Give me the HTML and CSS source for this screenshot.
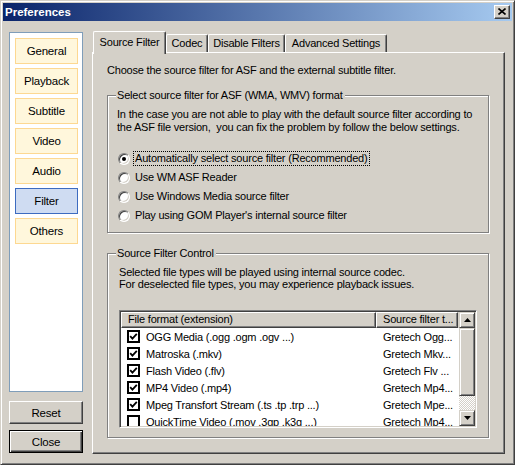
FILE: index.html
```html
<!DOCTYPE html>
<html>
<head>
<meta charset="utf-8">
<link rel="stylesheet" href="styles.css">
</head>
<body>
<div class="window">
  <div class="titlebar">
    <span class="title">Preferences</span>
    <span class="xbtn"><svg width="8" height="7" viewBox="0 0 8 7"><path d="M0.5 0.5 L7.5 6.5 M7.5 0.5 L0.5 6.5" stroke="#000" stroke-width="1.6" fill="none"/></svg></span>
  </div>
  <div class="main">
    <div class="leftcol">
      <div class="sidebar">
        <div class="navbtn">General</div>
        <div class="navbtn">Playback</div>
        <div class="navbtn">Subtitle</div>
        <div class="navbtn">Video</div>
        <div class="navbtn">Audio</div>
        <div class="navbtn active">Filter</div>
        <div class="navbtn">Others</div>
      </div>
      <div class="btn">Reset</div>
      <div class="btn default">Close</div>
    </div>
    <div class="rightcol">
      <div class="tabs">
        <div class="tab active t1">Source Filter</div>
        <div class="tab t2">Codec</div>
        <div class="tab t3">Disable Filters</div>
        <div class="tab t4">Advanced Settings</div>
      </div>
      <div class="panel">
        <p class="intro">Choose the source filter for ASF and the external subtitle filter.</p>
        <fieldset class="group g1">
          <legend>Select source filter for ASF (WMA, WMV) format</legend>
          <p class="desc">In the case you are not able to play with the default source filter according to<br>the ASF file version,&nbsp; you can fix the problem by follow the below settings.</p>
          <div class="radios">
            <div class="radio"><span class="rb checked"></span><span class="rl focus">Automatically select source filter (Recommended)</span></div>
            <div class="radio"><span class="rb"></span><span class="rl">Use WM ASF Reader</span></div>
            <div class="radio"><span class="rb"></span><span class="rl">Use Windows Media source filter</span></div>
            <div class="radio"><span class="rb"></span><span class="rl">Play using GOM Player's internal source filter</span></div>
          </div>
        </fieldset>
        <fieldset class="group g2">
          <legend>Source Filter Control</legend>
          <p class="desc2">Selected file types will be played using internal source codec.<br>For deselected file types, you may experience playback issues.</p>
          <div class="list">
            <div class="listmain">
              <div class="lhead">
                <div class="hc c1">File format (extension)</div>
                <div class="hc c2">Source filter t...</div>
                <div class="hfill"></div>
              </div>
              <div class="rows">
                <div class="row"><div class="c1 cell"><svg class="cb" width="13" height="13" viewBox="0 0 13 13"><rect x="1" y="1" width="11" height="11" fill="#fff" stroke="#000" stroke-width="2"/><path d="M3.2 6.2 L5.4 8.6 L9.8 3.8" stroke="#000" stroke-width="1.8" fill="none"/></svg><span>OGG Media (.ogg .ogm .ogv ...)</span></div><div class="c2 cell">Gretech Ogg...</div></div>
                <div class="row"><div class="c1 cell"><svg class="cb" width="13" height="13" viewBox="0 0 13 13"><rect x="1" y="1" width="11" height="11" fill="#fff" stroke="#000" stroke-width="2"/><path d="M3.2 6.2 L5.4 8.6 L9.8 3.8" stroke="#000" stroke-width="1.8" fill="none"/></svg><span>Matroska (.mkv)</span></div><div class="c2 cell">Gretech Mkv...</div></div>
                <div class="row"><div class="c1 cell"><svg class="cb" width="13" height="13" viewBox="0 0 13 13"><rect x="1" y="1" width="11" height="11" fill="#fff" stroke="#000" stroke-width="2"/><path d="M3.2 6.2 L5.4 8.6 L9.8 3.8" stroke="#000" stroke-width="1.8" fill="none"/></svg><span>Flash Video (.flv)</span></div><div class="c2 cell">Gretech Flv ...</div></div>
                <div class="row"><div class="c1 cell"><svg class="cb" width="13" height="13" viewBox="0 0 13 13"><rect x="1" y="1" width="11" height="11" fill="#fff" stroke="#000" stroke-width="2"/><path d="M3.2 6.2 L5.4 8.6 L9.8 3.8" stroke="#000" stroke-width="1.8" fill="none"/></svg><span>MP4 Video (.mp4)</span></div><div class="c2 cell">Gretech Mp4...</div></div>
                <div class="row"><div class="c1 cell"><svg class="cb" width="13" height="13" viewBox="0 0 13 13"><rect x="1" y="1" width="11" height="11" fill="#fff" stroke="#000" stroke-width="2"/><path d="M3.2 6.2 L5.4 8.6 L9.8 3.8" stroke="#000" stroke-width="1.8" fill="none"/></svg><span>Mpeg Transfort Stream (.ts .tp .trp ...)</span></div><div class="c2 cell">Gretech Mpe...</div></div>
                <div class="row"><div class="c1 cell"><svg class="cb" width="13" height="13" viewBox="0 0 13 13"><rect x="1" y="1" width="11" height="11" fill="#fff" stroke="#000" stroke-width="2"/></svg><span>QuickTime Video (.mov .3gp .k3g ...)</span></div><div class="c2 cell">Gretech Mp4...</div></div>
              </div>
            </div>
            <div class="scrollbar">
              <div class="sbtn"><svg width="7" height="4" viewBox="0 0 7 4"><path d="M3.5 0 L7 4 L0 4 Z" fill="#000"/></svg></div>
              <div class="thumb"></div>
              <div class="track"></div>
              <div class="sbtn"><svg width="7" height="4" viewBox="0 0 7 4"><path d="M0 0 L7 0 L3.5 4 Z" fill="#000"/></svg></div>
            </div>
          </div>
        </fieldset>
      </div>
    </div>
  </div>
</div>
</body>
</html>
```
FILE: styles.css
```css
* { box-sizing: border-box; }
html, body { margin: 0; padding: 0; }
body {
  background: #d4d0c8;
  font-family: "Liberation Sans", Arial, sans-serif;
  font-size: 11px;
  letter-spacing: -0.2px;
  color: #000;
}
p { margin: 0; }

.window {
  width: 515px;
  height: 465px;
  border: 1px solid;
  border-color: #d4d0c8 #404040 #404040 #d4d0c8;
  box-shadow: inset 1px 1px 0 #fff, inset -1px -1px 0 #808080;
  padding: 2px;
  background: #d4d0c8;
}

.titlebar {
  height: 18px;
  background: linear-gradient(to right, #0a246a, #a6caf0);
  display: flex;
  align-items: center;
  justify-content: space-between;
  padding: 0 2px 0 2px;
}
.title {
  color: #fff;
  font-weight: bold;
  font-size: 11.5px;
  letter-spacing: 0;
}
.xbtn {
  width: 16px;
  height: 14px;
  background: #d4d0c8;
  border: 1px solid;
  border-color: #fff #404040 #404040 #fff;
  box-shadow: inset -1px -1px 0 #808080;
  display: flex;
  align-items: center;
  justify-content: center;
  padding-bottom: 1px;
}
.xbtn svg { display: block; }

.main {
  display: flex;
  align-items: flex-start;
}

.leftcol {
  margin-top: 11px;
  margin-left: 6px;
  width: 74px;
  display: flex;
  flex-direction: column;
}
.sidebar {
  height: 360px;
  border: 1px solid #7f9db9;
  background: #fff;
  padding: 5px 0 0 5px;
  display: flex;
  flex-direction: column;
  gap: 4px;
}
.navbtn {
  width: 63px;
  height: 26px;
  border: 1px solid #fdd891;
  background: #fff7dc;
  display: flex;
  align-items: center;
  justify-content: center;
  font-size: 11.5px;
}
.navbtn.active {
  background: #cfdcf2;
  border-color: #3d6bc0;
}

.btn {
  height: 23px;
  margin-top: 9px;
  background: #d4d0c8;
  border: 1px solid;
  border-color: #fff #404040 #404040 #fff;
  box-shadow: inset -1px -1px 0 #808080;
  display: flex;
  align-items: center;
  justify-content: center;
  font-size: 11.5px;
}
.btn.default {
  margin-top: 6px;
  border-color: #000;
  box-shadow: inset 1px 1px 0 #fff, inset -1px -1px 0 #404040, inset -2px -2px 0 #808080;
}

.rightcol {
  margin-top: 10px;
  margin-left: 9px;
  width: 413px;
}
.tabs {
  height: 21px;
  display: flex;
  align-items: flex-end;
}
.tab {
  height: 18px;
  border-top: 1px solid #fff;
  border-left: 1px solid #fff;
  border-right: 1px solid #404040;
  box-shadow: inset -1px 0 0 #808080;
  border-radius: 2px 2px 0 0;
  text-align: center;
  line-height: 15px;
  padding-top: 1px;
  background: #d4d0c8;
  white-space: nowrap;
}
.tab.active {
  height: 23px;
  margin-bottom: -2px;
  margin-left: 1px;
  padding-top: 3px;
  position: relative;
  z-index: 2;
}
.t1 { width: 73px; }
.t2 { width: 42px; }
.t3 { width: 77px; }
.t4 { width: 102px; }

.panel {
  height: 402px;
  border: 1px solid;
  border-color: #fff #404040 #404040 #fff;
  box-shadow: inset -1px -1px 0 #808080;
  padding: 11px 0 0 14px;
  position: relative;
  z-index: 1;
}
.intro { line-height: 13px; }

.group {
  margin: 0;
  width: 382px;
  border: 1px solid #808080;
  box-shadow: 1px 1px 0 #fff, inset 1px 1px 0 #fff;
  padding: 0;
  min-width: 0;
}
.group legend {
  margin-left: 8px;
  padding: 0 2px 0 1px;
  line-height: 13px;
  background: #d4d0c8;
}
.g1 { margin-top: 12px; padding-bottom: 7px; }
.desc {
  margin-top: 6px;
  padding-left: 9px;
  line-height: 13px;
  white-space: nowrap;
}
.radios {
  margin-top: 15px;
  padding-left: 10px;
  display: flex;
  flex-direction: column;
}
.radio {
  height: 19px;
  display: flex;
  align-items: center;
}
.rb {
  width: 12px;
  height: 12px;
  border-radius: 50%;
  border: 1px solid;
  border-color: #808080 #fff #fff #808080;
  box-shadow: inset 1px 1px 0 #404040, inset -1px -1px 0 #d4d0c8;
  background: #fff;
  margin-right: 3px;
  display: flex;
  align-items: center;
  justify-content: center;
  flex: none;
}
.rb.checked::after {
  content: "";
  width: 4px;
  height: 4px;
  border-radius: 50%;
  background: #000;
}
.rl {
  border: 1px dotted transparent;
  padding: 0 1px;
  line-height: 13px;
  white-space: nowrap;
}
.rl.focus { border-color: #000; }

.g2 { margin-top: 14px; padding-bottom: 9px; }
.desc2 {
  margin-top: 6px;
  padding-left: 11px;
  line-height: 12px;
  white-space: nowrap;
}
.list {
  margin-top: 20px;
  margin-left: 11px;
  width: 358px;
  height: 118px;
  border: 1px solid;
  border-color: #808080 #fff #fff #808080;
  box-shadow: inset 1px 1px 0 #404040, inset -1px -1px 0 #d4d0c8;
  padding: 1px;
  display: flex;
  background: #fff;
}
.listmain {
  flex: 1;
  overflow: hidden;
  background: #fff;
}
.lhead {
  height: 16px;
  display: flex;
  background: #d4d0c8;
}
.hc {
  height: 16px;
  border: 1px solid;
  border-color: #fff #404040 #404040 #fff;
  box-shadow: inset -1px -1px 0 #808080;
  padding-left: 6px;
  line-height: 13px;
  white-space: nowrap;
  overflow: hidden;
}
.lhead .c1 { width: 255px; }
.lhead .c2 { width: 82px; }
.hfill { flex: 1; }
.row {
  height: 17px;
  display: flex;
  align-items: center;
}
.cell { white-space: nowrap; overflow: hidden; }
.row .c1 {
  width: 255px;
  display: flex;
  align-items: center;
  padding-left: 6px;
}
.cb { display: block; flex: none; margin-right: 6px; }
.row .c2 { width: 82px; padding-left: 7px; }

.scrollbar {
  width: 16px;
  display: flex;
  flex-direction: column;
}
.sbtn, .thumb {
  background: #d4d0c8;
  border: 1px solid;
  border-color: #d4d0c8 #404040 #404040 #d4d0c8;
  box-shadow: inset 1px 1px 0 #fff, inset -1px -1px 0 #808080;
}
.sbtn {
  height: 16px;
  display: flex;
  align-items: center;
  justify-content: center;
}
.sbtn svg { display: block; }
.thumb { height: 68px; }
.track {
  flex: 1;
  background: repeating-conic-gradient(#fff 0 25%, #d4d0c8 0 50%) 0 0 / 2px 2px;
}
```
